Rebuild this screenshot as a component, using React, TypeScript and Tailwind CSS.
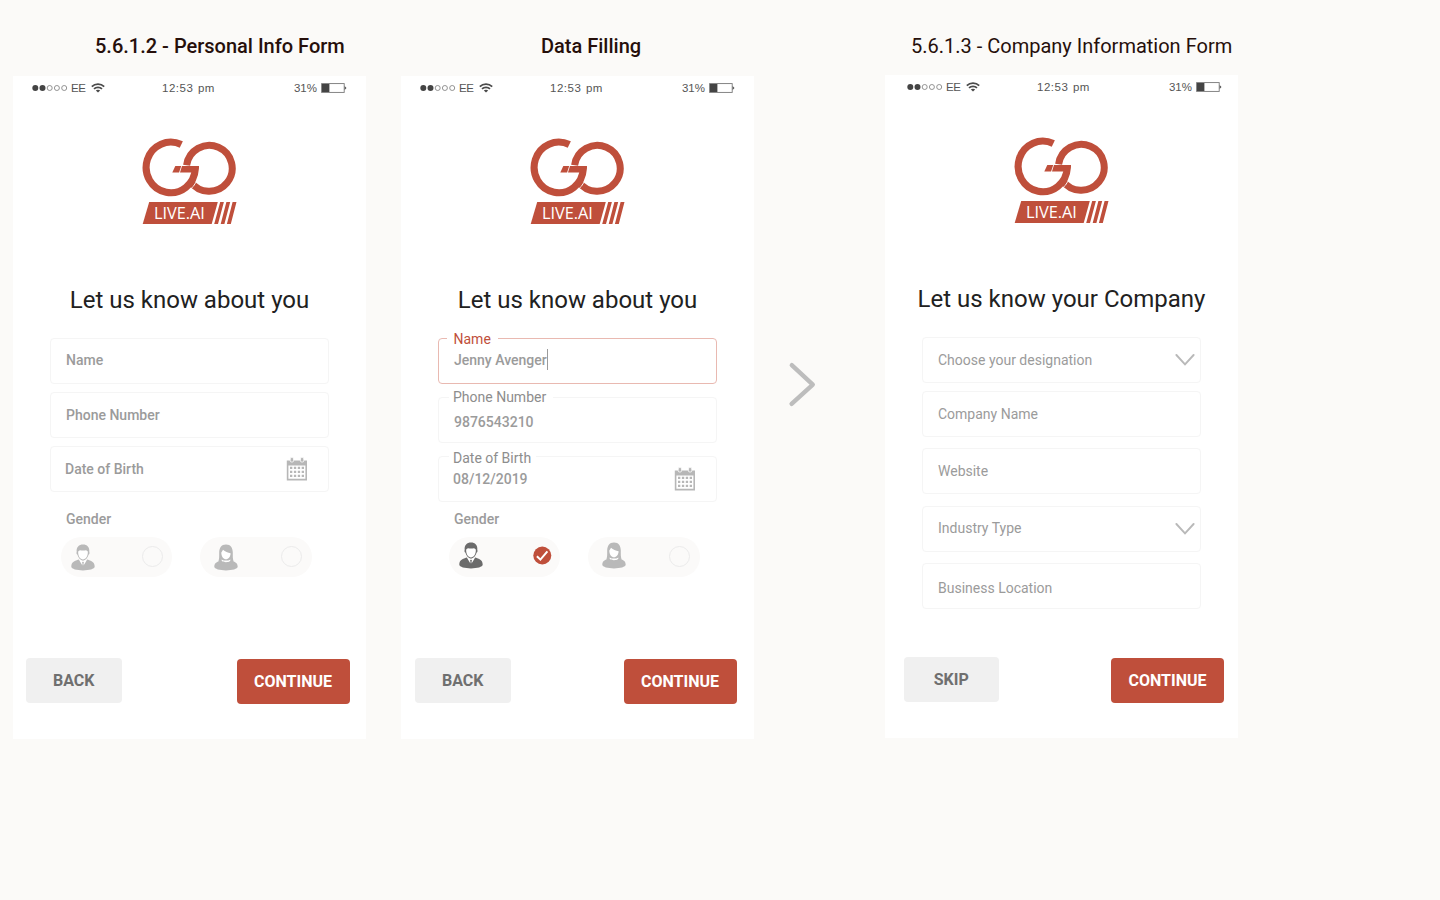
import React from "react";

const RED = "#bf4f3b";

function StatusBar({ className }: { className: string }) {
  return (
    <div className={"grid h-[24px] grid-cols-3 items-center font-['Liberation_Sans',sans-serif] text-[11.5px] leading-[24px] text-[#555] " + className}>
      <div className="flex items-center">
        <svg width="36" height="8" viewBox="0 0 36 8">
          <circle cx="3.3" cy="4" r="3" fill="#444" />
          <circle cx="10.5" cy="4" r="3" fill="#444" />
          <g fill="none" stroke="#888" strokeWidth="0.9">
            <circle cx="17.7" cy="4" r="2.5" />
            <circle cx="24.9" cy="4" r="2.5" />
            <circle cx="32.2" cy="4" r="2.5" />
          </g>
        </svg>
        <span className="ml-[3px] w-[15px] tracking-[-0.5px]">EE</span>
        <svg className="ml-[5px]" width="14" height="10" viewBox="0 0 14 10" fill="none" stroke="#4a4a4a">
          <path d="M0.8 3.6C4.2 0.2 9.8 0.2 13.2 3.6" strokeWidth="1.7" />
          <path d="M3 5.9C5.2 3.8 8.8 3.8 11 5.9" strokeWidth="1.7" />
          <path d="M4.8 7.4C6 6.4 8 6.4 9.2 7.4L7 9.6Z" fill="#4a4a4a" stroke="none" />
        </svg>
      </div>
      <div className="whitespace-pre pl-[25px] tracking-[0.5px] [word-spacing:1px]">12:53 pm</div>
      <div className="flex items-center justify-end">
        <span>31%</span>
        <svg className="ml-[4px]" width="26" height="10" viewBox="0 0 26 10">
          <rect x="0.6" y="0.6" width="22.6" height="8.8" fill="#fff" stroke="#777" strokeWidth="0.9" />
          <rect x="1" y="1" width="7.4" height="8" fill="#444" />
          <path d="M23.6 3L25.5 5L23.6 7Z" fill="#555" />
        </svg>
      </div>
    </div>
  );
}

function Logo() {
  return (
    <svg className="mx-auto mt-[38px] shrink-0" width="96" height="88" viewBox="142 138 96 88">
      <path d="M186.6 165.3A22.9 22.9 0 1 1 190.5 181.4" fill="none" stroke={RED} strokeWidth="7" />
      <path d="M199.6 168A28.6 29.3 0 0 1 188.6 191" fill="none" stroke="#fff" strokeWidth="0.9" />
      <path d="M181.3 144.55A24.6 25.3 0 1 0 195.3 169V166" fill="none" stroke={RED} strokeWidth="7.1" />
      <path d="M182 166H198.85V168L196 172.4H180Z" fill={RED} />
      <path d="M175.3 166H181.2L179.1 172.4H172.3Z" fill={RED} />
      <path d="M149.2 202H217.8L211.7 224H142.7Z" fill={RED} />
      <path d="M220.2 202H223.9L218 224H214.2ZM226.4 202H230.2L224.4 224H220.7ZM232.6 202H236.5L230.8 224H226.9Z" fill={RED} />
      <text x="153.9" y="218.9" textLength="51" lengthAdjust="spacingAndGlyphs" fill="#fff" className="font-['Open_Sans',sans-serif] text-[16px]">
        LIVE.AI
      </text>
    </svg>
  );
}

function CalendarIcon({ className }: { className: string }) {
  return (
    <svg className={className} width="22" height="24" viewBox="0 0 22 24">
      <path d="M0.8 3.5H21V23.4H0.8ZM2.4 8.4V21.8H19.4V8.4Z" fill="#b7b7b7" fillRule="evenodd" />
      <rect x="4.2" y="0.6" width="3.4" height="4.4" rx="1.3" fill="#b7b7b7" stroke="#fff" strokeWidth="0.8" />
      <rect x="14.4" y="0.6" width="3.4" height="4.4" rx="1.3" fill="#b7b7b7" stroke="#fff" strokeWidth="0.8" />
      <g stroke="#b7b7b7" strokeWidth="2.2" strokeDasharray="2.3 1.6">
        <path d="M4 10.8H18" />
        <path d="M4 14.8H18" />
        <path d="M4 18.8H18" />
      </g>
    </svg>
  );
}

function ManIcon({ color }: { color: string }) {
  return (
    <svg width="24" height="27" viewBox="0 0 24 27">
      <path d="M7.6 15.6C4.2 17 0.3 17.6 0.3 22.8C0.3 25 6 26.4 12 26.4S23.7 25 23.7 22.8C23.7 17.6 19.8 17 16.4 15.6L12 18.6Z" fill={color} />
      <path d="M8.8 15L12 17.6L15.2 15L15.6 16.6L12.6 21.4H11.4L8.4 16.6Z" fill="#fff" />
      <path d="M12 17.4L13.1 18.8L12.5 19.6L12.9 22.6L12 24L11.1 22.6L11.5 19.6L10.9 18.8Z" fill={color} />
      <path d="M5.7 8C5.1 3 8 0.5 12 0.5S18.9 3 18.3 8C18.9 8.8 18.4 10.2 17.5 10.8C16.6 14.2 14.2 16.6 12 16.6S7.4 14.2 6.5 10.8C5.6 10.2 5.1 8.8 5.7 8Z" fill={color} />
      <path d="M7.2 7.6C7.8 6.8 8.2 6.4 9 6.3C11 6.7 13 6.7 15 6.3C15.8 6.4 16.2 6.8 16.8 7.6C17.2 12 14.6 15.6 12 15.6S6.8 12 7.2 7.6Z" fill="#fff" />
    </svg>
  );
}

function WomanIcon({ color }: { color: string }) {
  return (
    <svg width="24" height="27" viewBox="0 0 24 27">
      <path d="M12 0.5C7.3 0.5 5.2 4 5.2 8.6C5.2 12.4 5.4 14.6 4.4 17.4C2.2 18.4 0.3 19.2 0.3 22.8C0.3 25 6 26.4 12 26.4S23.7 25 23.7 22.8C23.7 19.2 21.8 18.4 19.6 17.4C18.6 14.6 18.8 12.4 18.8 8.6C18.8 4 16.7 0.5 12 0.5Z" fill={color} />
      <path d="M7.3 8.4C8.1 7.6 8.6 6.6 9 5.8C11 7.6 14 8.8 16.6 9.2C16.6 12.6 14.4 15.2 12 15.2S7.3 12.4 7.3 8.4Z" fill="#fff" />
      <path d="M7.6 15.4C10 17 14 17 16.4 15.4L16.2 17C14 18.6 10 18.6 7.8 17Z" fill="#fff" />
    </svg>
  );
}

function Chevron() {
  return (
    <svg width="20" height="12" viewBox="0 0 20 12" fill="none" stroke="#b9b9b9" strokeWidth="1.9">
      <path d="M1.4 1L10 10.3L18.6 1" strokeLinecap="round" />
    </svg>
  );
}

const fieldBase =
  "relative flex h-[46px] w-[279px] shrink-0 items-center rounded-[4px] border text-[14px] leading-[16px] text-[#9b9b9b] whitespace-pre";

function Pill({ children, mark, className, iconClass }: { children: React.ReactNode; mark: React.ReactNode; className: string; iconClass: string }) {
  return (
    <div className={"flex h-[40px] w-[111.5px] items-center justify-between rounded-full bg-[#fbfaf9] pr-[9.5px] " + className}>
      <div className={iconClass}>{children}</div>
      {mark}
    </div>
  );
}

const emptyMark = <div className="mb-px h-[21px] w-[21px] rounded-full border border-[#ebebeb]" />;

const checkedMark = (
  <svg className="-mr-px mb-[4px]" width="19" height="19" viewBox="0 0 19 19">
    <circle cx="9.3" cy="9.5" r="9" fill={RED} />
    <path d="M3.9 10.2L7.4 13.6L14.4 5.4" fill="none" stroke="#fff" strokeWidth="2" />
  </svg>
);

function Actions({ left, className }: { left: string; className: string }) {
  return (
    <div className={"flex items-start justify-between text-[16px] font-bold " + className}>
      <button className="h-[45px] w-[95.5px] rounded-[4px] bg-[#f0f0f0] text-[#6f6f6f]">{left}</button>
      <button className="mt-[0.5px] h-[45.5px] w-[113px] rounded-[4px] bg-[#bf4f3b] pt-px text-white">CONTINUE</button>
    </div>
  );
}

function Gender({ selected }: { selected?: boolean }) {
  const iconClass = selected ? "mb-[4px]" : "";
  return (
    <>
      <div className="pl-[53px] text-[14px] font-medium leading-[16px] text-[#9b9b9b]">Gender</div>
      <div className="mt-[10px] flex gap-[28px] pl-[47.5px]">
        <Pill className="pl-[10.5px]" iconClass={iconClass} mark={selected ? checkedMark : emptyMark}>
          <ManIcon color={selected ? "#6b6b6b" : "#b9b9b9"} />
        </Pill>
        <Pill className="pl-[14px]" iconClass={iconClass} mark={emptyMark}>
          <WomanIcon color="#b9b9b9" />
        </Pill>
      </div>
    </>
  );
}

interface ScreenProps {
  title: string;
  heading: string;
  children: React.ReactNode;
  className: string;
  titleClass: string;
  statusClass?: string;
}

function Screen({ title, heading, children, className, titleClass, statusClass = "px-[19px]" }: ScreenProps) {
  return (
    <section className={"flex w-[353px] shrink-0 flex-col " + className}>
      <h2 className={"whitespace-pre text-[20px] leading-[24px] text-[#260f0b] " + titleClass}>{title}</h2>
      <div className="flex h-[662.5px] flex-col bg-white">
        <StatusBar className={statusClass} />
        <Logo />
        <h1 className="mt-[60px] whitespace-pre text-center text-[24px] leading-[28px] text-[#212121]">{heading}</h1>
        {children}
      </div>
    </section>
  );
}

export default function App() {
  return (
    <main className="flex h-[900px] w-[1440px] items-start overflow-hidden bg-[#fbfaf8] pl-[13px] font-[Roboto,sans-serif]">
      <Screen className="pt-[34px]" titleClass="pl-[82px] font-medium mb-[18px]" title="5.6.1.2 - Personal Info Form" heading="Let us know about you">
        <div className={fieldBase + " ml-[37px] mt-[24px] border-[#f5f5f5] pl-[15px] pb-[2px] font-medium"}>Name</div>
        <div className={fieldBase + " ml-[37px] mt-[8px] border-[#f5f5f5] pl-[15px] font-medium"}>Phone Number</div>
        <div className={fieldBase + " ml-[36.5px] mt-[8px] mb-[19px] border-[#f5f5f5] pl-[14.5px] font-medium"}>
          Date of Birth
          <CalendarIcon className="ml-auto mr-[20px] mb-px" />
        </div>
        <Gender />
        <Actions left="BACK" className="mt-[81px] ml-[13px] mr-[16.5px]" />
      </Screen>

      <Screen className="ml-[35px] pt-[34px]" titleClass="pl-[140px] font-medium mb-[18px]" title="Data Filling" heading="Let us know about you">
        <div className={fieldBase + " ml-[37px] mt-[24px] border-[#e9b9b1] pl-[15px] pb-[2px] font-medium"}>
          <span className="absolute -top-[8px] left-[8px] w-[51px] bg-white pl-[6.5px] font-normal text-[#bf4f3b]">Name</span>
          Jenny Avenger
          <span className="mb-[2px] h-[21px] w-px bg-[#9b9b9b]" />
        </div>
        <div className={fieldBase + " ml-[37px] mt-[13px] border-[#f5f5f5] pl-[15px] pt-[4px] font-medium"}>
          <span className="absolute -top-[9px] left-[10px] w-[104px] bg-white pl-[4px] font-normal text-[#8d8d8d]">Phone Number</span>
          9876543210
        </div>
        <div className={fieldBase + " ml-[37px] mt-[13px] mb-[9px] border-[#f5f5f5] pl-[14px] font-medium"}>
          <span className="absolute -top-[7px] left-[10px] w-[87px] bg-white pl-[4px] font-normal text-[#8d8d8d]">Date of Birth</span>
          08/12/2019
          <CalendarIcon className="ml-auto mr-[20px]" />
        </div>
        <Gender selected />
        <Actions left="BACK" className="mt-[81px] ml-[14px] mr-[17.5px]" />
      </Screen>

      <svg className="ml-[34px] mt-[361px] shrink-0" width="28" height="46" viewBox="0 0 28 46" fill="none" stroke="#bdbdbd" strokeWidth="4.4" strokeLinecap="round" strokeLinejoin="round">
        <path d="M3.8 4.2L24.8 23.6L3.6 42.8" />
      </svg>

      <Screen className="ml-[69px] pt-[34px]" titleClass="pl-[26px] mb-[17px]" statusClass="pl-[22px] pr-[16px]" title="5.6.1.3 - Company Information Form" heading="Let us know your Company">
        <div className={fieldBase + " ml-[37px] mt-[24px] border-[#f5f5f5] pl-[15px]"}>
          Choose your designation
          <span className="ml-auto mr-[5px]"><Chevron /></span>
        </div>
        <div className={fieldBase + " ml-[37px] mt-[8px] border-[#f5f5f5] pl-[15px]"}>Company Name</div>
        <div className={fieldBase + " ml-[37px] mt-[11px] border-[#f5f5f5] pl-[15px]"}>Website</div>
        <div className={fieldBase + " ml-[37px] mt-[11.5px] border-[#f5f5f5] pb-px pl-[15px]"}>
          Industry Type
          <span className="ml-auto mr-[5px] pt-px"><Chevron /></span>
        </div>
        <div className={fieldBase + " ml-[37px] mt-[11.5px] border-[#f5f5f5] pl-[15px] pt-[4px]"}>Business Location</div>
        <Actions left="SKIP" className="mt-[48px] ml-[18.5px] mr-[14px]" />
      </Screen>
    </main>
  );
}
